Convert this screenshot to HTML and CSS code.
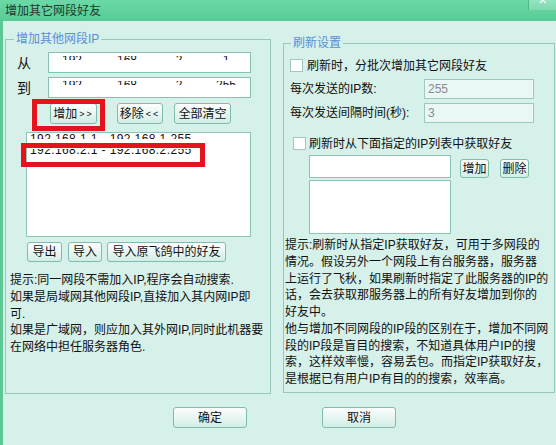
FILE: index.html
```html
<!DOCTYPE html>
<html lang="zh-CN">
<head>
<meta charset="utf-8">
<title>增加其它网段好友</title>
<link rel="stylesheet" href="styles.css">
</head>
<body>
<div class="window">
  <div class="titlebar">
    <span class="title">增加其它网段好友</span>
    <span class="close"><span class="close-x">✕</span></span>
  </div>
  <div class="frame">
    <div class="main">
      <fieldset class="group group-left">
        <legend>增加其他网段IP</legend>
        <div class="inner-left">
          <div class="iprow">
            <span class="iplabel">从</span>
            <div class="ipfield">
              <span class="seg s1">192</span><span class="seg s2">168</span><span class="seg s3">2</span><span class="seg s4">1</span>
            </div>
          </div>
          <div class="iprow">
            <span class="iplabel">到</span>
            <div class="ipfield">
              <span class="seg s1">192</span><span class="seg s2">168</span><span class="seg s3">2</span><span class="seg s4">255</span>
            </div>
          </div>
          <div class="btnrow">
            <span class="btn b-add">增加<span class="arrows">&gt;&gt;</span></span>
            <span class="btn b-remove">移除<span class="arrows">&lt;&lt;</span></span>
            <span class="btn b-clear">全部清空</span>
            <span class="mark mark1"></span>
          </div>
          <div class="listbox">
            <div class="item item1">192.168.1.1 - 192.168.1.255</div>
            <div class="item item2"><div class="shift">192.168.2.1 - 192.168.2.255</div></div>
            <span class="mark mark2"></span>
          </div>
          <div class="btnrow2">
            <span class="btn b-export">导出</span>
            <span class="btn b-import">导入</span>
            <span class="btn b-importold">导入原飞鸽中的好友</span>
          </div>
          <p class="hint">提示:同一网段不需加入IP,程序会自动搜索.<br>如果是局域网其他网段IP,直接加入其内网IP即<br>可.<br>如果是广域网，则应加入其外网IP,同时此机器要<br>在网络中担任服务器角色.</p>
        </div>
      </fieldset>
      <fieldset class="group group-right">
        <legend>刷新设置</legend>
        <div class="inner-right">
          <div class="cbrow cb1">
            <span class="checkbox"></span>
            <span class="cbtext">刷新时，分批次增加其它网段好友</span>
          </div>
          <div class="frow fr1">
            <span class="flabel">每次发送的IP数:</span>
            <span class="dfield">255</span>
          </div>
          <div class="frow fr2">
            <span class="flabel">每次发送间隔时间(秒):</span>
            <span class="dfield">3</span>
          </div>
          <div class="cbrow cb2">
            <span class="checkbox"></span>
            <span class="cbtext cbtext2">刷新时从下面指定的IP列表中获取好友</span>
          </div>
          <div class="addrow">
            <span class="tfield"></span>
            <span class="btn b-small b-add2">增加</span>
            <span class="btn b-small b-del">删除</span>
          </div>
          <div class="list2"></div>
          <p class="hint hint2">提示:刷新时从指定IP获取好友，可用于多网段的<br>情况。假设另外一个网段上有台服务器，服务器<br>上运行了飞秋，如果刷新时指定了此服务器的IP的<br>话，会去获取那服务器上的所有好友增加到你的<br>好友中。<br>他与增加不同网段的IP段的区别在于，增加不同网<br>段的IP段是盲目的搜索，不知道具体用户IP的搜<br>索，这样效率慢，容易丢包。而指定IP获取好友，<br>是根据已有用户IP有目的的搜索，效率高。</p>
        </div>
      </fieldset>
    </div>
    <div class="footer">
      <span class="btn b-footer">确定</span>
      <span class="btn b-footer">取消</span>
    </div>
  </div>
</div>
</body>
</html>
```
FILE: styles.css
```css
* { box-sizing: border-box; }
body {
  margin: 0;
  font-family: "Liberation Sans", "Noto Sans CJK SC", sans-serif;
  font-size: 12px;
  color: #111;
  background: #d6f0ea;
}
.window {
  width: 556px;
  height: 445px;
  background: #d6f0ea;
  display: flex;
  flex-direction: column;
  overflow: hidden;
}
.titlebar {
  height: 21px;
  flex-shrink: 0;
  background: linear-gradient(#6bd9a7, #57cb95);
  display: flex;
  align-items: center;
  padding-left: 5px;
}
.title {
  color: #1f3a2b;
  font-size: 12px;
  line-height: 14px;
}
.close {
  margin-left: auto;
  align-self: flex-start;
  width: 28px;
  height: 10px;
  background: linear-gradient(#94e4c2, #7fd9b1);
  border-left: 1px solid #4fba88;
  overflow: hidden;
  display: flex;
  justify-content: center;
}
.close-x {
  color: #fff;
  font-size: 11px;
  line-height: 8px;
  margin-top: -3px;
  font-family: "DejaVu Sans", sans-serif;
}
.frame {
  flex: 1;
  border-left: 3px solid #5ec895;
  padding-left: 2px;
  display: flex;
  flex-direction: column;
}
.main {
  display: flex;
  align-items: flex-start;
  gap: 12px;
  padding-top: 11px;
}
.group {
  margin: 0;
  padding: 0;
  border: 1px solid #93c8ba;
  min-width: 0;
}
.group legend {
  padding: 0 2px;
  font-size: 12px;
  line-height: 14px;
  color: #5a8fd8;
}
.group-left { width: 266px; height: 362px; }
.group-left legend { margin-left: 8px; }
.group-right { width: 272px; height: 357px; margin-top: 4px; }
.group-right legend { margin-left: 7px; }

/* left group */
.inner-left { padding: 6px 0 0 4px; }
.iprow {
  display: flex;
  align-items: center;
  height: 21px;
}
.iprow + .iprow { margin-top: 4px; }
.iplabel {
  width: 31px;
  margin-left: 7px;
  font-size: 14px;
  line-height: 16px;
}
.ipfield {
  width: 203px;
  height: 21px;
  background: #fff;
  border: 1px solid #86c2b2;
  display: flex;
  align-items: flex-start;
}
.seg {
  display: block;
  height: 4px;
  margin-top: 3px;
  overflow: hidden;
  line-height: 9px;
  font-size: 12px;
  text-align: center;
  color: #111;
}
.s1 { width: 46px; }
.s2 { width: 64px; }
.s3 { width: 40px; }
.s4 { width: 51px; padding-left: 3px; }

.btnrow {
  position: relative;
  display: flex;
  height: 21px;
  margin-top: 5px;
  padding-left: 40px;
}
.btn {
  height: 21px;
  border: 1px solid #80bcad;
  border-radius: 3px;
  background: linear-gradient(#fdfefe, #d2eee6);
  display: flex;
  align-items: center;
  justify-content: center;
  font-size: 12px;
  line-height: 14px;
  color: #111;
  white-space: nowrap;
}
.arrows {
  font-size: 9px;
  letter-spacing: 2px;
  margin-left: 2px;
}
.b-add { width: 47px; }
.b-remove { width: 46px; margin-left: 20px; }
.b-clear { width: 57px; margin-left: 11px; }

.mark {
  position: absolute;
  border: 5px solid #e3141c;
}
.mark1 { left: 22px; top: -4px; width: 73px; height: 32px; }

.listbox {
  position: relative;
  margin-top: 8px;
  margin-left: 16px;
  width: 225px;
  height: 105px;
  background: #fff;
  border: 1px solid #8cc4b5;
  padding-left: 3px;
}
.item {
  font-size: 12px;
  line-height: 12px;
  letter-spacing: 0.4px;
  white-space: nowrap;
  overflow: hidden;
}
.item1 { height: 6px; }
.item2 { height: 9px; margin-top: 10px; }
.item2 .shift { margin-top: -5px; }
.mark2 { left: -6px; top: 10px; width: 184px; height: 24px; }

.btnrow2 {
  display: flex;
  height: 20px;
  margin-top: 5px;
  margin-left: 17px;
}
.btnrow2 .btn { height: 20px; }
.b-export { width: 35px; }
.b-import { width: 34px; margin-left: 6px; }
.b-importold { width: 119px; margin-left: 5px; }

.hint {
  margin: 10px 0 0 0;
  font-size: 12px;
  line-height: 16.75px;
  white-space: nowrap;
  color: #111;
}

/* right group */
.inner-right { padding: 0 0 0 1px; }
.cbrow {
  display: flex;
  align-items: center;
  height: 13px;
}
.cb1 { margin-top: 9px; margin-left: 5px; }
.checkbox {
  width: 13px;
  height: 13px;
  background: #fff;
  border: 1px solid #a3c7be;
  flex-shrink: 0;
}
.cbtext { margin-left: 4px; line-height: 14px; white-space: nowrap; }
.cbtext2 { margin-left: 3px; }
.frow {
  display: flex;
  align-items: center;
  height: 20px;
  margin-left: 5px;
}
.fr1 { margin-top: 7px; }
.fr2 { margin-top: 4px; }
.flabel { width: 134px; line-height: 14px; white-space: nowrap; }
.dfield {
  width: 110px;
  height: 20px;
  background: #e9f8f7;
  border: 1px solid #9ccac0;
  color: #8a8a8a;
  padding-left: 3px;
  line-height: 18px;
  font-size: 12px;
}
.cb2 { margin-top: 14px; margin-left: 8px; }
.addrow {
  display: flex;
  align-items: flex-end;
  height: 23px;
  margin-top: 5px;
  margin-left: 24px;
}
.tfield {
  width: 142px;
  height: 23px;
  background: #fff;
  border: 1px solid #8cc4b5;
}
.b-small { width: 29px; height: 19px; }
.b-add2 { margin-left: 9px; }
.b-del { margin-left: 11px; }
.list2 {
  width: 142px;
  height: 54px;
  margin-top: 2px;
  margin-left: 24px;
  background: #fff;
  border: 1px solid #8cc4b5;
}
.hint2 { margin-top: 3px; }

.footer {
  display: flex;
  gap: 75px;
  margin-top: 13px;
  padding-left: 168px;
}
.b-footer { width: 74px; height: 21px; }
```
